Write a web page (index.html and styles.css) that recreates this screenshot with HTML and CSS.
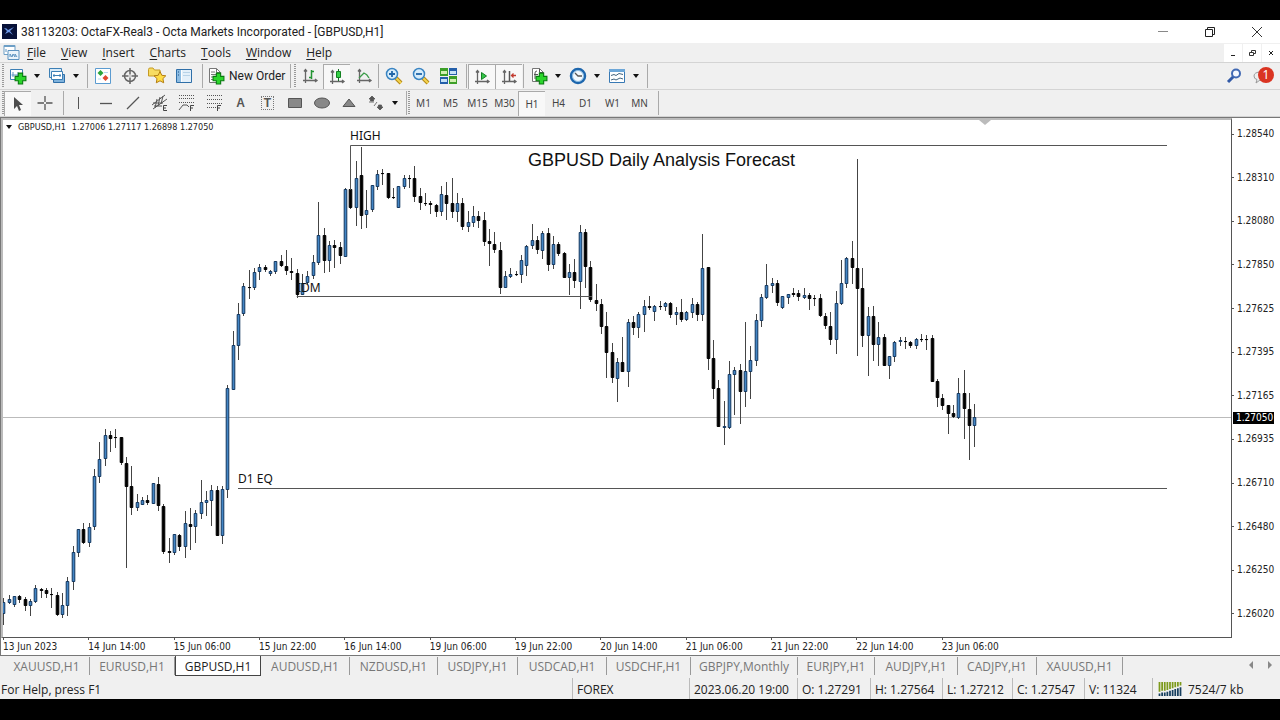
FILE: index.html
```html
<!DOCTYPE html>
<html lang="en">
<head>
<meta charset="utf-8">
<title>38113203: OctaFX-Real3 - Octa Markets Incorporated - [GBPUSD,H1]</title>
<link rel="stylesheet" href="styles.css">
</head>
<body>
<svg class="defs" aria-hidden="true">
  <defs>
    <symbol id="plus" viewBox="0 0 12 12"><path d="M4 1h4v3h3v4H8v3H4V8H1V4h3z" fill="#2bd52b" stroke="#087a10"/></symbol>
    <symbol id="axes" viewBox="0 0 18 18"><path d="M4.500 3v13M2 13.500h13M3 4.500l1.500-2 1.500 2M14 12l2 1.500-2 1.500" fill="none" stroke="#666" stroke-width="1.300"/></symbol>
  </defs>
</svg>
<div class="window">
  <header class="titlebar">
    <svg class="app-logo" viewBox="0 0 15 15"><rect width="15" height="15" fill="#071138"/><path d="M2 4q3 0 4 2l6-3-4 4 3 4-4-3-4 2 2-3z" fill="#6f9bea"/></svg>
    <h1 class="caption">38113203: OctaFX-Real3 - Octa Markets Incorporated - [GBPUSD,H1]</h1>
    <div class="window-controls">
      <button aria-label="Minimize"><svg viewBox="0 0 12 12"><path d="M1 5.500h10" stroke="#888"/></svg></button>
      <button aria-label="Restore"><svg viewBox="0 0 12 12"><path d="M1.500 3.500h7v7h-7zM3.500 3.500v-2h7v7h-2" fill="none" stroke="#222"/></svg></button>
      <button aria-label="Close"><svg viewBox="0 0 12 12"><path d="M1 1l10 10M11 1L1 11" stroke="#333"/></svg></button>
    </div>
  </header>

  <nav class="menubar">
    <svg class="menu-logo" viewBox="0 0 17 17"><path d="M1 1.500h11v9H1z" fill="#fff" stroke="#6d9fc6"/><path d="M1 1h11v2H1z" fill="#6d9fc6"/><path d="M5 6.500h11v9H5z" fill="#eaf4fb" stroke="#5d93c0"/><path d="M7 13v-3l2 3 1-3 2 3v-3l2 3M3 5v3" fill="none" stroke="#5d93c0"/></svg>
    <button><u>F</u>ile</button><button><u>V</u>iew</button><button><u>I</u>nsert</button><button><u>C</u>harts</button><button><u>T</u>ools</button><button><u>W</u>indow</button><button><u>H</u>elp</button>
    <div class="child-controls">
      <button aria-label="Minimize chart"><svg viewBox="0 0 8 8"><path d="M2 6.500h4" stroke="#222"/></svg></button>
      <button aria-label="Restore chart"><svg viewBox="0 0 8 8"><path d="M1.500 3.500h4v3h-4zM3.500 3V1.500h4v3H6" fill="none" stroke="#333"/></svg></button>
      <button aria-label="Close chart"><svg viewBox="0 0 8 8"><path d="M2 2l4 4M6 2L2 6" stroke="#222"/></svg></button>
    </div>
  </nav>

  <div class="toolbar" role="toolbar" aria-label="Standard">
    <span class="grip"></span>
    <button class="tool" aria-label="New chart"><svg viewBox="0 0 18 18"><path d="M1.500 2.500h12v10h-12z" fill="#fff" stroke="#3c7fb5"/><path d="M4 5v5M2.500 8h9M9 5v4" stroke="#5d93c0"/><use href="#plus" x="5" y="5" width="13" height="13"/></svg></button>
    <button class="drop" aria-label="New chart list"></button>
    <button class="tool" aria-label="Profiles"><svg viewBox="0 0 18 18"><path d="M1.500 1.500h12v9h-12z" fill="#d9ebf8" stroke="#3c7fb5"/><path d="M5.500 7.500h11v8h-11z" fill="#7fb2dc" stroke="#2f6fa8"/><path d="M3.500 4.500h11v8h-11z" fill="#fff" stroke="#3c7fb5"/><path d="M5 8.500h8M6 7v3M12 7v3" stroke="#3c7fb5"/></svg></button>
    <button class="drop" aria-label="Profile list"></button>
    <span class="sep wide"></span>
    <button class="tool" aria-label="Market watch"><svg viewBox="0 0 18 18"><path d="M1.500 1.500h15v15h-15z" fill="#fff" stroke="#5b9bd0"/><path d="M6.500 3l3 3-3 3-3-3z" fill="#2ba53a"/><path d="M11.500 8l3 3-3 3-3-3z" fill="#e2492f"/><path d="M10 5.500h4M4 12h3" stroke="#b9d9ef"/></svg></button>
    <button class="tool" aria-label="Data window"><svg viewBox="0 0 18 18"><circle cx="9" cy="9" r="5.500" fill="none" stroke="#666" stroke-width="1.500"/><path d="M9 1v16M1 9h16" stroke="#666" stroke-width="1.500"/><path d="M7 9h4M9 7v4" stroke="#eee"/></svg></button>
    <button class="tool" aria-label="Navigator"><svg viewBox="0 0 18 18"><path d="M.5 2.500q0-1.500 1.500-1.500h3l1.500 2H12v6H.5z" fill="#f7dc62" stroke="#c59a25"/><path d="M12 4.500l1.800 3.800 4 .5-2.900 2.800.8 4.200-3.700-2-3.700 2 .7-4.200L6 8.800l4.200-.5z" fill="#ffdc45" stroke="#b37d12"/></svg></button>
    <button class="tool" aria-label="Terminal"><svg viewBox="0 0 18 18"><path d="M1.500 2.500h15v13h-15z" fill="#fff" stroke="#2f6fa8"/><path d="M2 3h4v12H2z" fill="#8dbce2"/><path d="M7 3h9v12H7z" fill="#e4f0fa"/><path d="M8 5.500h7M8 8.500h7" stroke="#b8d3e8"/><path d="M3 5h1M3 8h1" stroke="#1c4f84"/></svg></button>
    <span class="sep wide"></span>
    <button class="order"><svg viewBox="0 0 18 18"><path d="M2.500 1.500h7l4 4v10h-11z" fill="#fff" stroke="#777"/><path d="M9.500 1.500v4h4M4 5h4M4 7.500h7M4 10h4M4 12.500h3" fill="none" stroke="#777"/><use href="#plus" x="5" y="5" width="13" height="13"/></svg>New Order</button>
    <span class="sep"></span><span class="grip spaced"></span>
    <button class="tool" aria-label="Bar chart"><svg viewBox="0 0 18 18"><use href="#axes"/><path d="M10.500 3v9M8 10.500h2.500M10.500 4.500H13" stroke="#239433" stroke-width="1.500"/></svg></button>
    <button class="tool on" aria-label="Candlesticks"><svg viewBox="0 0 18 18"><use href="#axes"/><path d="M10.500 1v12" stroke="#176d25"/><path d="M8.500 3.500h4v6h-4z" fill="#35cf46" stroke="#128020"/></svg></button>
    <button class="tool" aria-label="Line chart"><svg viewBox="0 0 18 18"><use href="#axes"/><path d="M4 11l5-5q3 1 5 5" fill="none" stroke="#3a9b48" stroke-width="1.300"/></svg></button>
    <span class="sep"></span>
    <button class="tool" aria-label="Zoom in"><svg viewBox="0 0 18 18"><path d="M11 11l5 5" stroke="#b58a18" stroke-width="4"/><path d="M11 11l5 5" stroke="#f5d44f" stroke-width="2"/><circle cx="7" cy="7" r="5.500" fill="#d7edfb" stroke="#3984c2" stroke-width="1.500"/><path d="M4 7h6M7 4v6" stroke="#2166a8" stroke-width="1.800"/></svg></button>
    <button class="tool" aria-label="Zoom out"><svg viewBox="0 0 18 18"><path d="M11 11l5 5" stroke="#b58a18" stroke-width="4"/><path d="M11 11l5 5" stroke="#f5d44f" stroke-width="2"/><circle cx="7" cy="7" r="5.500" fill="#d7edfb" stroke="#3984c2" stroke-width="1.500"/><path d="M4 7h6" stroke="#2166a8" stroke-width="1.800"/></svg></button>
    <button class="tool" aria-label="Tile windows"><svg viewBox="0 0 18 18"><path d="M1 1h8v8H1zM10 9h8v8h-8z" fill="#3d9f28"/><path d="M10 1h8v7h-8zM1 10h8v7H1z" fill="#245fa9"/><path d="M2 4h6v3H2zM11 12h6v3h-6z" fill="#d3efb2"/><path d="M11 4h6v3h-6zM2 12h6v3H2z" fill="#c7e2f6"/></svg></button>
    <span class="sep wide"></span>
    <button class="tool on" aria-label="Auto scroll"><svg viewBox="0 0 18 18"><use href="#axes"/><path d="M8.500 4.500l5 3.500-5 3.500z" fill="#35c548" stroke="#148024"/></svg></button>
    <button class="tool on" aria-label="Chart shift"><svg viewBox="0 0 18 18"><use href="#axes"/><path d="M9.500 3v10" stroke="#555" stroke-width="1.500"/><path d="M16 7.500h-4M13.500 5.500l-2 2 2 2" fill="none" stroke="#c23c31" stroke-width="1.300"/></svg></button>
    <span class="sep"></span>
    <button class="tool" aria-label="Indicators"><svg viewBox="0 0 18 18"><path d="M2.500 1.500h7l4 4v9h-11z" fill="#fff" stroke="#777"/><path d="M9.500 1.500v4h4M7 4q-2 0-2 2v6M4 7.500h4" fill="none" stroke="#555"/><use href="#plus" x="5" y="5" width="13" height="13"/></svg></button>
    <button class="drop" aria-label="Indicator list"></button>
    <button class="tool" aria-label="Periods"><svg viewBox="0 0 18 18"><circle cx="9" cy="9" r="7" fill="#f1f9ff" stroke="#1d66ad" stroke-width="2.500"/><circle cx="9" cy="9" r="5.500" fill="none" stroke="#87b9e0"/><path d="M6 6l3 3h4" fill="none" stroke="#555" stroke-width="1.300"/></svg></button>
    <button class="drop" aria-label="Period list"></button>
    <button class="tool" aria-label="Templates"><svg viewBox="0 0 18 18"><path d="M1.500 2.500h15v13h-15z" fill="#fff" stroke="#3879b4"/><path d="M1 2h16v3H1z" fill="#6da7d8"/><path d="M3 8.500l3-1 2 1 3-2 4 1M3 13l3-1 2 1 4-2 3 1" fill="none" stroke="#42637c"/></svg></button>
    <button class="drop" aria-label="Template list"></button>
    <span class="sep wide"></span>
    <div class="toolbar-end">
      <button class="tool" aria-label="Search"><svg viewBox="0 0 18 18"><path d="M9 9l-6 6" stroke="#3159a7" stroke-width="3"/><circle cx="11" cy="6.500" r="4" fill="#f4f8ff" stroke="#4169b3" stroke-width="2"/></svg></button>
      <button class="tool notify" aria-label="Messages"><svg viewBox="0 0 18 18"><path d="M9 5q-7 0-7 4 0 3 3 3.500L4 16l4-3q6 0 7-3" fill="#eee" stroke="#999"/></svg><span class="badge">1</span></button>
    </div>
  </div>

  <div class="toolbar" role="toolbar" aria-label="Line studies">
    <span class="grip"></span>
    <button class="tool on" aria-label="Cursor"><svg viewBox="0 0 18 18"><path d="M5 2v12l3-3 2 5 2-1-2-5h4z" fill="#4d4d4d"/></svg></button>
    <button class="tool" aria-label="Crosshair"><svg viewBox="0 0 18 18"><path d="M9 2v6M9 10v6M1.500 9H8M10 9h6.500" stroke="#555" stroke-width="1.300"/></svg></button>
    <span class="sep wide"></span>
    <button class="tool" aria-label="Vertical line"><svg viewBox="0 0 18 18"><path d="M8.500 3v12" stroke="#555"/></svg></button>
    <button class="tool" aria-label="Horizontal line"><svg viewBox="0 0 18 18"><path d="M3 9.500h12" stroke="#555" stroke-width="1.300"/></svg></button>
    <button class="tool" aria-label="Trendline"><svg viewBox="0 0 18 18"><path d="M3 15L15 3" stroke="#555" stroke-width="1.300"/></svg></button>
    <button class="tool" aria-label="Equidistant channel"><svg viewBox="0 0 18 18"><path d="M1 11L14 1M2 15L16 5M4 14L6 5M7 12l2-9M10 10l2-8M2 9h10M3 12h8" stroke="#555"/><path d="M16 11.500h-3.500v5H16M12.500 14H15" fill="none" stroke="#444"/></svg></button>
    <button class="tool" aria-label="Fibonacci fan"><svg viewBox="0 0 18 18"><path d="M1 1.500h16M1 4.500h16M1 8.500h16" stroke="#555" stroke-dasharray="1 1"/><path d="M1 16l4-5h4l2 2" fill="none" stroke="#555"/><path d="M16 11.500h-3.500V17M12.500 14H15" fill="none" stroke="#444"/></svg></button>
    <button class="tool" aria-label="Fibonacci retracement"><svg viewBox="0 0 18 18"><path d="M2 1.500h15M2 5.500h15M2 9.500h15M2 13.500h9" stroke="#555" stroke-dasharray="1 1"/><path d="M16 11.500h-3.500V17M12.500 14H15" fill="none" stroke="#444"/></svg></button>
    <button class="tool letter" aria-label="Text">A</button>
    <button class="tool letter" aria-label="Text label"><span class="dotted">T</span></button>
    <button class="tool" aria-label="Rectangle"><svg viewBox="0 0 18 18"><path d="M2.500 4.500h13v9h-13z" fill="#888" stroke="#555"/></svg></button>
    <button class="tool" aria-label="Ellipse"><svg viewBox="0 0 18 18"><ellipse cx="9" cy="9" rx="7.500" ry="5" fill="#888" stroke="#555"/></svg></button>
    <button class="tool" aria-label="Triangle"><svg viewBox="0 0 18 18"><path d="M9 5l6 7.500H3z" fill="#888" stroke="#555"/></svg></button>
    <button class="tool" aria-label="Arrows"><svg viewBox="0 0 18 18"><path d="M5 2l3 3H6.500v2h-3V5H2zM13 16l-3-3h1.500v-2h3v2H16zM2 8h5M10 8l-3 4" fill="#555" stroke="#555" stroke-width=".8"/></svg></button>
    <button class="drop" aria-label="Arrow list"></button>
    <span class="sep wide"></span><span class="grip"></span>
    <button class="tool period">M1</button><button class="tool period">M5</button><button class="tool period">M15</button><button class="tool period">M30</button><button class="tool period on">H1</button><button class="tool period">H4</button><button class="tool period">D1</button><button class="tool period">W1</button><button class="tool period">MN</button>
    <span class="sep wide"></span>
  </div>

  <main class="chart">
    <div class="plot">
      <svg class="candles" id="candles" role="img" aria-label="GBPUSD hourly candlestick chart"></svg>
      <p class="quote"><span class="caret"></span><span>GBPUSD,H1</span><span>1.27006 1.27117 1.26898 1.27050</span></p>
    </div>
    <div class="prices">
      <span>1.28540</span><span>1.28310</span><span>1.28080</span><span>1.27850</span><span>1.27625</span><span>1.27395</span><span>1.27165</span><span>1.26935</span><span>1.26710</span><span>1.26480</span><span>1.26250</span><span>1.26020</span>
      <strong class="current">1.27050</strong>
    </div>
    <div class="dates">
      <span>13 Jun 2023</span><span>14 Jun 14:00</span><span>15 Jun 06:00</span><span>15 Jun 22:00</span><span>16 Jun 14:00</span><span>19 Jun 06:00</span><span>19 Jun 22:00</span><span>20 Jun 14:00</span><span>21 Jun 06:00</span><span>21 Jun 22:00</span><span>22 Jun 14:00</span><span>23 Jun 06:00</span>
    </div>
  </main>

  <nav class="tabs">
    <button>XAUUSD,H1</button><button>EURUSD,H1</button><button class="active">GBPUSD,H1</button><button>AUDUSD,H1</button><button>NZDUSD,H1</button><button>USDJPY,H1</button><button>USDCAD,H1</button><button>USDCHF,H1</button><button>GBPJPY,Monthly</button><button>EURJPY,H1</button><button>AUDJPY,H1</button><button>CADJPY,H1</button><button>XAUUSD,H1</button>
    <div class="tab-scroll">
      <button aria-label="Previous tabs"><svg viewBox="0 0 6 8"><path d="M5 0v8L1 4z" fill="#888"/></svg></button>
      <button aria-label="Next tabs"><svg viewBox="0 0 6 8"><path d="M1 0v8l4-4z" fill="#888"/></svg></button>
    </div>
  </nav>

  <footer class="status">
    <span>For Help, press F1</span><span>FOREX</span><span>2023.06.20 19:00</span><span>O: 1.27291</span><span>H: 1.27564</span><span>L: 1.27212</span><span>C: 1.27547</span><span>V: 11324</span>
    <span class="traffic"><svg viewBox="0 0 26 16"><path d="M1 0v11M4 0v10M7 0v10M10 0v9M13 0v8M16 0v7M19 0v6M22 0v5M25 0v4" stroke="#7d9a1c" stroke-width="2"/><path d="M1 13v3M4 12v4M7 12v4M10 11v5M13 10v6M16 9v7M19 8v8M22 7v9M25 6v10" stroke="#173f5f" stroke-width="2"/></svg>7524/7 kb</span>
  </footer>
</div>
<script src="chart.js"></script>
</body>
</html>
```

FILE: styles.css
```css
* { box-sizing: border-box; }
body {
  margin: 0;
  background: #000;
  color: #222;
  font: 12px/16px "Open Sans", "Noto Sans", sans-serif;
}
button {
  border: 0;
  padding: 0;
  margin: 0;
  background: none;
  color: inherit;
  font: inherit;
}
.defs { position: absolute; width: 0; height: 0; }
.window {
  display: flex;
  flex-direction: column;
  min-height: 100vh;
  border: solid #000;
  border-width: 20px 0 21px;
  background: #f0f0f0;
}

.titlebar { display: flex; align-items: center; height: 23px; padding-left: 2px; background: #fff; }
.app-logo { width: 15px; height: 15px; margin-right: 4px; }
.caption { margin: 0; font: 12px/16px Roboto, "Open Sans", sans-serif; white-space: nowrap; }
.window-controls { display: flex; margin-left: auto; }
.window-controls button { display: grid; place-items: center; width: 47px; height: 23px; }
.window-controls svg { width: 12px; height: 12px; }

.menubar { display: flex; align-items: center; height: 20px; padding-left: 3px; border-bottom: 1px solid #d4d4d4; }
.menu-logo { width: 17px; height: 17px; margin-right: 7px; }
.menubar > button { margin-right: 15px; }
.menubar u { text-underline-offset: 2px; }
.child-controls { display: flex; gap: 1px; margin-left: auto; }
.child-controls button { display: grid; place-items: center; width: 18px; height: 18px; background: #fff; }
.child-controls svg { width: 8px; height: 8px; }

.toolbar { display: flex; align-items: center; height: 27px; padding-left: 2px; border-bottom: 1px solid #d4d4d4; }
.grip { width: 2px; height: 24px; background: repeating-linear-gradient(#999 0 1px, #f0f0f0 1px 2px); }
.grip.spaced { margin-left: 2px; }
.sep { width: 1px; height: 24px; margin: 0 1px; background: #aaa; }
.sep.wide { margin-left: 5px; }
.tool { display: grid; place-items: center; width: 27px; height: 25px; }
.tool svg, .order svg { width: 18px; height: 18px; }
.tool.on { background: #f8f8f8; border: solid #aaa; border-width: 1px 0 0 1px; }
.drop { display: grid; place-items: center; width: 12px; height: 24px; }
.drop::before, .caret {
  content: "";
  border: solid transparent;
  border-width: 4px 3px 0;
  border-top-color: #111;
}
.order { display: flex; align-items: center; gap: 4px; padding: 0 4px 0 3px; font-family: Roboto, "Open Sans", sans-serif; white-space: nowrap; }
.letter { color: #555; font: bold 12px/14px "Liberation Sans", sans-serif; }
.dotted { width: 13px; height: 14px; border: 1px dotted #777; line-height: 12px; }
.period { color: #444; font: 10px/14px "Noto Sans", sans-serif; }
.toolbar-end { display: flex; margin-left: auto; padding-right: 6px; }
.notify { position: relative; }
.badge {
  position: absolute;
  top: 3px;
  right: 0;
  width: 16px;
  height: 16px;
  border-radius: 50%;
  background: #da3422;
  color: #fff;
  font: 12px/16px "Noto Sans", sans-serif;
}

.chart {
  flex: 1;
  display: grid;
  grid-template: minmax(0, 1fr) 17px / minmax(0, 1fr) 48px;
  border: solid #777;
  border-width: 1px 0 1px 1px;
  background: #fff;
  font: 10px/14px "DejaVu Sans Condensed", "Noto Sans", sans-serif;
}
.plot { position: relative; border: solid #555; border-width: 2px 1px 1px 2px; border-top-color: #bbb; border-left-color: #bbb; }
.candles { position: absolute; width: 100%; height: 100%; }
.quote { position: absolute; top: 0; left: 3px; display: flex; align-items: center; gap: 6px; margin: 0; font-size: 9px; white-space: nowrap; }
.prices { position: relative; display: flex; flex-direction: column; justify-content: space-between; padding: 9px 0 17px; }
.prices span { display: flex; align-items: center; gap: 3px; }
.prices span::before { content: ""; width: 2px; height: 1px; background: #555; }
.current { position: absolute; top: 294px; left: 1px; width: 41px; height: 12px; padding-left: 3px; background: #000; color: #fff; font-weight: 400; line-height: 12px; }
.dates { grid-column: 1 / -1; display: grid; grid-template-columns: repeat(12, 1fr); width: 1024px; margin-left: 2px; }
.dates span::before { content: ""; display: block; width: 1px; height: 2px; background: #555; }

.bull { fill: #4285c5; stroke: #12365e; }
.bear { fill: #000; stroke: #000; }
.wick { fill: none; stroke: #444; }
.level { fill: none; stroke: #555; }
.bid { stroke: #bbb; }
.note { fill: #111; font: 12px "Noto Sans", sans-serif; }
.heading { fill: #111; font: 18px "Liberation Sans", sans-serif; }
.shift { fill: #bbb; }

.tabs {
  display: grid;
  grid-template-columns: 86px 85px 86px 89px 88px 80px 89px 84px 107px 77px 83px 79px 86px 1fr;
  height: 22px;
  padding-left: 4px;
  color: #777;
}
.tabs > button { height: 18px; margin-top: 1px; padding-top: 1px; border-right: 1px solid #999; line-height: 17px; white-space: nowrap; }
.tabs > .active { height: 20px; margin-top: 0; border: solid #444; border-width: 0 1px 1px; background: #fff; color: #222; }
.tab-scroll { display: flex; justify-content: flex-end; align-items: center; gap: 13px; padding: 0 7px 4px 0; }
.tab-scroll svg { display: block; width: 6px; height: 8px; }

.status { display: grid; grid-template-columns: 572px 117px 108px 73px 72px 70px 72px 68px 1fr; height: 21px; }
.status span { padding: 4px 0 0 4px; line-height: 16px; white-space: nowrap; border-left: 1px solid #bbb; }
.status span:first-child { padding-left: 1px; border-left: 0; }
.status .traffic { display: flex; align-items: flex-start; gap: 5px; }
.traffic svg { width: 26px; height: 14px; }
```

FILE: chart.js
```js
// Each bar: direction (1 up, 0 down), high, body top, body bottom, low, in screen units.
const bars = [
[1,598,602,614,625],[1,595,599,603,604],[1,596,596,605,607],[0,595,596,600,603],[0,597,599,606,611],[1,599,601,606,616],[1,585,588,602,603],[0,588,589,591,598],[0,588,590,594,598],[0,588,594,595,608],
[0,592,595,615,616],[1,593,605,615,618],[1,577,581,606,616],[1,546,552,582,590],[1,529,529,553,557],[0,523,529,543,544],[1,523,527,543,547],[1,469,476,527,530],[1,442,459,477,483],[1,429,435,459,466],
[0,431,435,439,452],[0,429,437,438,448],[0,437,437,463,465],[0,457,463,487,568],[0,466,486,508,515],[1,494,502,508,511],[1,497,500,505,505],[0,495,500,503,505],[1,483,483,504,504],[0,477,484,506,511],
[0,504,506,552,554],[0,538,551,553,563],[1,534,534,553,555],[0,534,535,547,551],[1,511,523,547,558],[0,508,524,527,550],[1,510,513,527,543],[1,480,502,514,519],[1,491,500,503,516],[1,485,490,501,526],
[0,486,490,536,536],[1,486,489,536,544],[1,385,388,490,498],[1,331,345,390,390],[1,303,314,346,360],[1,283,286,314,316],[0,270,287,288,299],[1,268,272,288,290],[1,264,267,272,280],[0,265,267,270,272],
[1,270,271,274,276],[1,261,261,272,274],[0,255,261,266,267],[0,250,266,271,275],[0,258,271,273,280],[0,269,273,295,298],[1,274,283,295,295],[1,271,276,283,284],[1,255,262,276,279],[1,202,235,263,265],
[0,228,235,261,273],[1,241,245,261,272],[0,240,245,248,268],[0,242,247,256,264],[1,188,189,257,257],[0,146,189,208,209],[1,161,178,208,226],[0,147,175,216,229],[1,190,210,215,228],[1,185,185,210,212],
[1,170,174,187,190],[0,169,173,174,185],[0,173,173,198,199],[0,188,197,198,199],[1,186,186,208,208],[1,175,178,187,189],[0,175,178,179,188],[0,166,178,197,202],[0,188,196,203,210],[0,193,203,204,206],
[0,201,203,205,214],[0,204,205,212,217],[1,186,194,212,216],[0,182,195,204,220],[0,178,203,212,218],[1,193,203,212,222],[0,198,203,227,230],[1,211,222,227,232],[1,206,216,223,227],[0,211,216,221,228],
[0,212,220,242,246],[0,229,241,244,266],[0,232,244,250,253],[0,242,250,288,294],[1,271,276,288,288],[1,268,274,277,278],[0,271,274,275,276],[1,255,260,275,283],[1,245,246,266,276],[1,224,240,246,249],
[0,236,240,250,254],[1,231,233,251,259],[0,228,233,265,271],[1,236,244,265,269],[0,242,244,254,256],[0,252,253,278,278],[1,264,272,278,295],[0,259,272,281,288],[1,225,232,282,309],[0,229,232,267,288],
[0,261,267,300,302],[0,284,300,304,311],[0,299,304,327,334],[0,312,326,353,378],[0,343,352,378,383],[1,358,362,379,402],[0,337,362,372,372],[1,319,322,372,387],[0,316,322,328,335],[1,312,314,328,338],
[1,300,306,315,332],[0,296,306,308,310],[1,305,306,312,321],[0,301,306,307,310],[1,302,303,307,311],[0,302,303,315,318],[1,307,312,315,325],[0,299,312,320,322],[1,311,312,320,321],[1,298,304,313,318],
[0,302,304,315,321],[1,234,268,315,321],[0,267,267,359,370],[0,340,358,389,399],[0,380,388,427,427],[1,401,426,428,445],[1,361,374,428,429],[1,367,370,375,415],[0,364,370,392,424],[1,322,371,392,407],
[1,346,360,372,399],[1,314,320,361,366],[1,294,297,321,327],[1,264,285,298,299],[1,278,283,286,293],[0,280,283,303,306],[1,296,296,308,309],[1,294,294,298,304],[0,288,293,295,297],[0,290,293,297,301],
[1,288,295,298,299],[0,293,295,299,310],[0,295,298,299,306],[0,294,298,316,317],[0,313,316,326,329],[0,312,326,340,345],[1,291,303,340,354],[1,260,283,304,305],[1,257,258,284,288],[0,241,258,268,284],
[0,159,268,289,356],[0,268,288,336,347],[1,307,316,336,376],[0,306,316,345,361],[1,322,337,345,366],[0,334,337,366,366],[1,356,356,366,379],[1,341,342,357,362],[1,337,340,342,346],[0,337,341,342,349],
[0,341,342,346,348],[1,338,339,346,349],[0,334,339,340,342],[0,335,339,340,350],[0,335,338,382,382],[0,379,381,398,407],[0,394,398,406,410],[0,405,405,414,434],[0,405,413,417,418],[1,378,393,418,419],
[0,370,393,409,439],[0,393,409,426,460],[1,404,417,426,447]
];
const step = 5.335;
let wicks = "", bull = "", bear = "";
bars.forEach(([up, high, top, bottom, low], i) => {
  const x = Math.round(3.4 + step * i) + 0.5;
  wicks += `M${x} ${high}V${low}`;
  const body = `M${x - 1.3} ${top + 0.5}h2.6V${Math.max(bottom - 0.5, top + 0.6)}h-2.6z`;
  if (up) bull += body; else bear += body;
});
document.getElementById("candles").innerHTML = `
<g transform="translate(-3 -120)">
  <path class="shift" d="M979 120h12l-6 5z"/>
  <path class="bid" d="M3 417.500H2400"/>
  <path class="wick" d="${wicks}"/>
  <path class="bull" d="${bull}"/>
  <path class="bear" d="${bear}"/>
  <path class="level" d="M350.500 190V145.500H1167M297 297V296.500H592M238 488.500H1167"/>
  <text class="note" x="350" y="140">HIGH</text>
  <text class="note" x="297" y="292">IDM</text>
  <text class="note" x="238" y="483">D1 EQ</text>
  <text class="heading" x="528" y="166">GBPUSD Daily Analysis Forecast</text>
</g>`;
```
